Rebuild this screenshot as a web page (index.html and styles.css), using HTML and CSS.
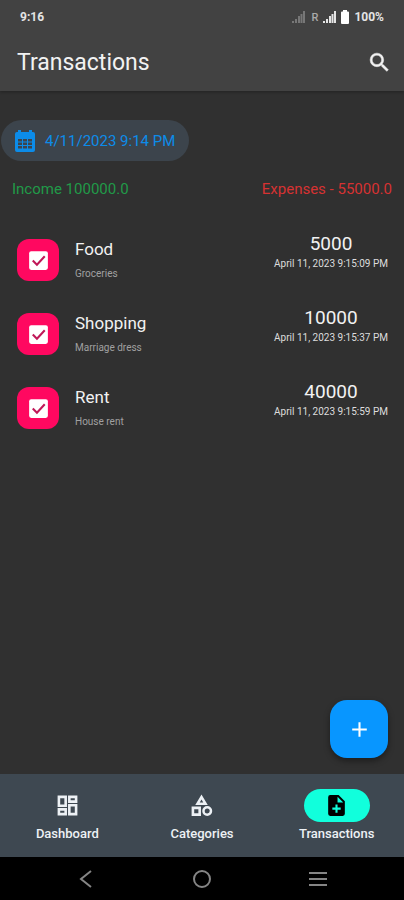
FILE: index.html
```
<!DOCTYPE html>
<html lang="en">
<head>
<meta charset="utf-8">
<meta name="viewport" content="width=device-width, initial-scale=1">
<title>Transactions</title>
<link rel="stylesheet" href="styles.css">
</head>
<body>
<header class="top">
  <div class="status">
    <span>9:16</span>
    <div class="status-icons">
      <svg class="signal dim" viewBox="0 0 13 12" aria-hidden="true"><path d="M0 10h2v2H0zM3 8h2v4H3zM6 5h2v7H6zM8.500 3h2v9h-2zM11 0h2v12h-2z"/></svg>
      <span class="roaming">R</span>
      <svg class="signal" viewBox="0 0 13 12" aria-hidden="true"><path d="M0 10h2v2H0zM3 8h2v4H3zM6 5h2v7H6zM8.500 3h2v9h-2zM11 0h2v12h-2z"/></svg>
      <svg class="battery" viewBox="0 0 8 14" aria-hidden="true"><path d="M2 0h4v1.500h1a1 1 0 0 1 1 1V13a1 1 0 0 1-1 1H1a1 1 0 0 1-1-1V2.500a1 1 0 0 1 1-1h1z"/></svg>
      <span>100%</span>
    </div>
  </div>
  <div class="appbar">
    <h1>Transactions</h1>
    <button class="icon-button" type="button" aria-label="Search">
      <svg viewBox="0 0 24 24"><path d="M15.500 14h-.79l-.28-.27A6.470 6.470 0 0 0 16 9.500 6.500 6.500 0 1 0 9.500 16c1.610 0 3.090-.59 4.230-1.570l.27.28v.79l5 4.990L20.490 19l-4.990-5zm-6 0C7.010 14 5 11.990 5 9.500S7.010 5 9.500 5 14 7.010 14 9.500 11.990 14 9.500 14z"/></svg>
    </button>
  </div>
</header>

<main>
  <button class="date" type="button">
    <svg viewBox="0 0 24 24" aria-hidden="true"><path fill-rule="evenodd" d="M20 3h-1V1h-3v2H8V1H5v2H4a2 2 0 0 0-2 2v16a2 2 0 0 0 2 2h16a2 2 0 0 0 2-2V5a2 2 0 0 0-2-2zM5 10h4v2.500H5zM10 10h4v2.500h-4zM15 10h4v2.500h-4zM5 13.500h4V16H5zM10 13.500h4V16h-4zM15 13.500h4V16h-4zM5 17h4v2.500H5zM10 17h4v2.500h-4zM15 17h4v2.500h-4z"/></svg>
    <span>4/11/2023 9:14 PM</span>
  </button>
  <div class="totals">
    <span class="income">Income 100000.0</span>
    <span class="expenses">Expenses - 55000.0</span>
  </div>
  <ul class="list">
    <li>
      <span class="badge"><svg viewBox="0 0 24 24" aria-hidden="true"><rect x="3" y="3" width="18" height="18" rx="2"/><path d="M6.500 12l4 4 7.500-8"/></svg></span>
      <div class="what"><h2>Food</h2><p>Groceries</p></div>
      <div class="amount"><strong>5000</strong><time>April 11, 2023 9:15:09 PM</time></div>
    </li>
    <li>
      <span class="badge"><svg viewBox="0 0 24 24" aria-hidden="true"><rect x="3" y="3" width="18" height="18" rx="2"/><path d="M6.500 12l4 4 7.500-8"/></svg></span>
      <div class="what"><h2>Shopping</h2><p>Marriage dress</p></div>
      <div class="amount"><strong>10000</strong><time>April 11, 2023 9:15:37 PM</time></div>
    </li>
    <li>
      <span class="badge"><svg viewBox="0 0 24 24" aria-hidden="true"><rect x="3" y="3" width="18" height="18" rx="2"/><path d="M6.500 12l4 4 7.500-8"/></svg></span>
      <div class="what"><h2>Rent</h2><p>House rent</p></div>
      <div class="amount"><strong>40000</strong><time>April 11, 2023 9:15:59 PM</time></div>
    </li>
  </ul>
  <button class="fab" type="button" aria-label="Add transaction"><svg viewBox="0 0 24 24"><path d="M19 13h-6v6h-2v-6H5v-2h6V5h2v6h6z"/></svg></button>
</main>

<nav class="tabs">
  <a href="#dashboard">
    <span class="pill"><svg viewBox="0 0 24 24" aria-hidden="true"><path fill-rule="evenodd" d="M2.500 2.500h9v11h-9zM5 5v6h4V5zM12.500 2.500h9v7h-9zM15 5v2h4V5zM2.500 14.500h9v7h-9zM5 17v2h4v-2zM12.500 10.500h9v11h-9zM15 13v6h4v-6z"/></svg></span>
    <span>Dashboard</span>
  </a>
  <a href="#categories">
    <span class="pill"><svg viewBox="0 0 24 24" aria-hidden="true"><path fill-rule="evenodd" d="M12 1.500L6 11.500h12zm0 4.800L13.700 9h-3.400zM17.500 12.500a4.800 4.800 0 1 0 0 9.600 4.800 4.800 0 0 0 0-9.600zm0 7.200a2.400 2.400 0 1 1 0-4.800 2.400 2.400 0 0 1 0 4.800zM2.500 22h9v-9h-9zM5 15.500h4v4H5z"/></svg></span>
    <span>Categories</span>
  </a>
  <a href="#transactions" aria-current="page">
    <span class="pill"><svg viewBox="0 0 24 24" aria-hidden="true"><path fill-rule="evenodd" d="M14 2H6a2 2 0 0 0-2 2v16a2 2 0 0 0 2 2h12a2 2 0 0 0 2-2V8zm2 14h-3v3h-2v-3H8v-2h3v-3h2v3h3zm-3-7V3.500L18.500 9z"/></svg></span>
    <span>Transactions</span>
  </a>
</nav>
<div class="system">
  <button type="button" aria-label="Back"><svg viewBox="0 0 20 20"><path d="M15 2L5 10l10 8"/></svg></button>
  <button type="button" aria-label="Home"><svg viewBox="0 0 20 20"><circle cx="10" cy="10" r="8"/></svg></button>
  <button type="button" aria-label="Recent apps"><svg viewBox="0 0 20 20"><path d="M1 4h18M1 10h18M1 16h18"/></svg></button>
</div>
</body>
</html>
```
FILE: styles.css
```
* { box-sizing: border-box; }
body {
  margin: 0;
  min-height: 100vh;
  display: flex;
  flex-direction: column;
  background: #303030;
  color: #f2f2f2;
  font-family: Roboto, "Liberation Sans", sans-serif;
}
h1, h2, p, ul { margin: 0; padding: 0; font-weight: 400; }
button { border: 0; padding: 0; background: none; color: inherit; font: inherit; }
svg { display: block; fill: currentColor; }

.top { background: #424242; box-shadow: 0 1px 3px rgba(0, 0, 0, .3); }
.status {
  display: flex;
  align-items: center;
  justify-content: space-between;
  height: 34px;
  padding: 0 20px;
  font-size: 12px;
  font-weight: 700;
  color: #e4e4e4;
}
.status-icons { display: flex; align-items: center; gap: 5px; }
.signal { width: 13px; height: 12px; }
.dim { color: #777; margin-right: 2px; }
.roaming { color: #aaa; font-size: 11px; font-weight: 500; }
.battery { width: 8px; height: 14px; color: #fff; }
.appbar {
  display: flex;
  align-items: center;
  justify-content: space-between;
  height: 57px;
  padding: 0 12px 0 17px;
}
h1 { font-size: 23px; line-height: 28px; }
.icon-button svg { width: 25px; height: 25px; stroke: currentColor; stroke-width: .5; }

main { position: relative; flex: 1; padding-top: 29px; }
.date {
  display: flex;
  align-items: center;
  gap: 8px;
  height: 41px;
  margin-left: 1px;
  padding: 0 14px 0 12px;
  border-radius: 21px;
  background: #3c444c;
  color: #0c8ce9;
  font-size: 15px;
}
.date svg { width: 24px; height: 24px; }
.totals {
  display: flex;
  justify-content: space-between;
  padding: 18px 12px 0;
  font-size: 15px;
  line-height: 20px;
}
.income { color: #219a48; }
.expenses { color: #d63232; }

.list { list-style: none; padding-top: 24px; }
.list li {
  display: flex;
  align-items: center;
  height: 74px;
  padding: 0 16px 0 17px;
}
.badge {
  display: grid;
  place-items: center;
  width: 42px;
  height: 42px;
  border-radius: 12px;
  background: #ff0860;
  color: #fff;
}
.badge svg { width: 25px; height: 25px; }
.badge path { fill: none; stroke: #c01858; stroke-width: 2; }
.what { flex: 1; padding-left: 16px; }
h2 { font-size: 17px; line-height: 22px; }
.what p { padding-top: 6px; font-size: 10px; line-height: 16px; color: #a0a0a0; }
.amount { display: flex; flex-direction: column; align-items: center; padding-bottom: 16px; }
.amount strong { font-size: 19px; line-height: 24px; font-weight: 400; }
.amount time { font-size: 10px; line-height: 16px; color: #ddd; }

.fab {
  position: absolute;
  right: 16px;
  bottom: 16px;
  display: grid;
  place-items: center;
  width: 58px;
  height: 58px;
  border-radius: 17px;
  background: #0896ff;
  color: #fff;
  box-shadow: 0 3px 6px rgba(0, 0, 0, .4);
}
.fab svg { width: 25px; height: 25px; }

.tabs { display: grid; grid-template-columns: repeat(3, 1fr); height: 83px; padding-top: 15px; background: #3e4851; }
.tabs a {
  display: flex;
  flex-direction: column;
  align-items: center;
  gap: 4px;
  color: #edf1f5;
  font-size: 13px;
  font-weight: 500;
  line-height: 16px;
  text-decoration: none;
}
.pill { display: grid; place-items: center; width: 66px; height: 33px; border-radius: 17px; }
.pill svg { width: 25px; height: 25px; }
[aria-current] .pill { background: #11ffdc; color: #000; }

.system { display: flex; justify-content: center; gap: 96px; height: 43px; background: #000; color: #858585; }
.system svg { width: 20px; height: 20px; fill: none; stroke: currentColor; stroke-width: 2; }
```
